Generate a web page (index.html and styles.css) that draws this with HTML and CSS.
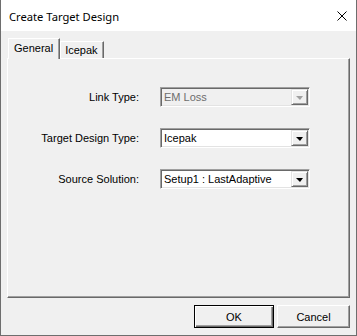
FILE: index.html
```html
<!DOCTYPE html>
<html lang="en">
<head>
    <meta charset="UTF-8">
    <meta name="viewport" content="width=device-width, initial-scale=1.0">
    <title>Create Target Design</title>
    <link rel="stylesheet" href="styles.css">
</head>
<body>
    <div class="window">
        <div class="titlebar">
            <span class="title">Create Target Design</span>
            <svg class="close" width="10" height="10" viewBox="0 0 10 10">
                <path d="M0.5 0.5 L9.5 9.5 M9.5 0.5 L0.5 9.5" stroke="#000" stroke-width="1" fill="none"/>
            </svg>
        </div>

        <div class="client">
            <div class="tabs">
                <div class="tab active">General</div>
                <div class="tab">Icepak</div>
            </div>

            <div class="panel">
                <div class="form-row">
                    <label class="field-label">Link Type:</label>
                    <div class="combo disabled">
                        <span class="combo-value">EM Loss</span>
                        <span class="combo-btn"><span class="arrow"></span></span>
                    </div>
                </div>
                <div class="form-row">
                    <label class="field-label">Target Design Type:</label>
                    <div class="combo">
                        <span class="combo-value">Icepak</span>
                        <span class="combo-btn"><span class="arrow"></span></span>
                    </div>
                </div>
                <div class="form-row">
                    <label class="field-label">Source Solution:</label>
                    <div class="combo">
                        <span class="combo-value">Setup1 : LastAdaptive</span>
                        <span class="combo-btn"><span class="arrow"></span></span>
                    </div>
                </div>
            </div>

            <div class="buttons">
                <button class="btn default">OK</button>
                <button class="btn">Cancel</button>
            </div>
        </div>
    </div>
</body>
</html>
```

FILE: styles.css
```css
body {
    margin: 0;
    font-family: "Liberation Sans", Arial, sans-serif;
    font-size: 11px;
    color: #000;
    background: #fff;
}
.window {
    width: 357px;
    height: 336px;
    box-sizing: border-box;
    border: 1px solid #6e6e6e;
    border-top: none;
    background: #f0f0f0;
    display: flex;
    flex-direction: column;
}
.titlebar {
    height: 31px;
    flex: none;
    background: #fff;
    display: flex;
    align-items: center;
    justify-content: space-between;
    padding: 0 9px 0 8px;
}
.title {
    font-family: "Noto Sans", sans-serif;
    font-size: 11.2px;
    margin-top: 1px;
}
.close {
    display: block;
}
.client {
    flex: 1;
    padding: 7px 6px 0 6px;
    display: flex;
    flex-direction: column;
}
.tabs {
    display: flex;
    align-items: flex-end;
    height: 20px;
    padding-left: 1px;
}
.tab {
    box-sizing: border-box;
    height: 17px;
    padding: 1px 5px 0 4px;
    border-top: 1px solid #fff;
    border-left: 1px solid #fff;
    border-right: 1px solid #696969;
    box-shadow: inset -1px 0 #a0a0a0;
    background: #f0f0f0;
    line-height: 14px;
}
.tab.active {
    position: relative;
    z-index: 1;
    height: 21px;
    margin-bottom: -1px;
    padding: 2px 6px 0 5px;
}
.panel {
    box-sizing: border-box;
    height: 240px;
    border-top: 1px solid #fff;
    border-left: 1px solid #fff;
    border-right: 1px solid #696969;
    border-bottom: 1px solid #696969;
    box-shadow: inset -1px -1px #a0a0a0;
    padding-top: 28px;
    display: grid;
    grid-template-columns: 131px 150px;
    column-gap: 21px;
    row-gap: 21px;
    align-content: start;
}
.form-row {
    display: contents;
}
.field-label {
    text-align: right;
    align-self: center;
}
.combo {
    box-sizing: border-box;
    height: 20px;
    border: 1px solid;
    border-color: #a0a0a0 #fff #fff #a0a0a0;
    box-shadow: inset 1px 1px #696969, inset -1px -1px #e3e3e3;
    background: #fff;
    display: flex;
    align-items: center;
    padding: 1px 1px 1px 3px;
}
.combo.disabled {
    background: #f0f0f0;
    color: #6d6d6d;
}
.combo-value {
    flex: 1;
}
.combo-btn {
    box-sizing: border-box;
    width: 17px;
    height: 16px;
    border: 1px solid;
    border-color: #e3e3e3 #696969 #696969 #e3e3e3;
    box-shadow: inset 1px 1px #fff, inset -1px -1px #a0a0a0;
    background: #f0f0f0;
    display: flex;
    align-items: center;
    justify-content: center;
}
.arrow {
    width: 0;
    height: 0;
    border-left: 4px solid transparent;
    border-right: 3px solid transparent;
    border-top: 4px solid #000;
    margin-top: 1px;
}
.combo.disabled .arrow {
    border-top-color: #a0a0a0;
}
.buttons {
    display: flex;
    justify-content: flex-end;
    gap: 3px;
    padding: 7px 0 0 0;
}
.btn {
    box-sizing: border-box;
    width: 73px;
    height: 23px;
    font-family: "Liberation Sans", Arial, sans-serif;
    font-size: 11px;
    color: #000;
    background: #f0f0f0;
    border: 1px solid;
    border-color: #fff #696969 #696969 #fff;
    box-shadow: inset -1px -1px #a0a0a0;
    padding: 0;
}
.btn.default {
    width: 80px;
    border-color: #000;
    box-shadow: inset 1px 1px #fff, inset -1px -1px #696969, inset -2px -2px #a0a0a0;
}
```
